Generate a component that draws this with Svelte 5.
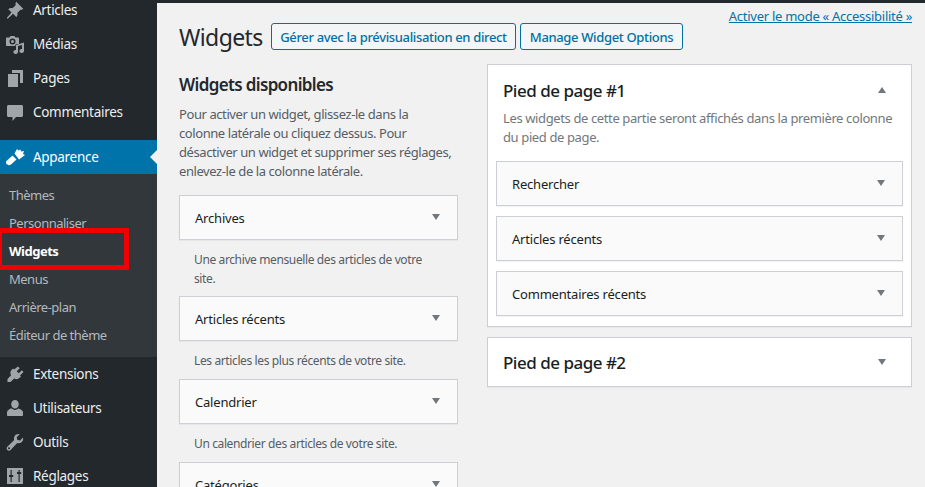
<script>
  const top = [
    { label: 'Articles', icon: 'pin' },
    { label: 'Médias', icon: 'media' },
    { label: 'Pages', icon: 'pages' },
    { label: 'Commentaires', icon: 'comment' }
  ];
  const sub = ['Thèmes', 'Personnaliser', 'Widgets', 'Menus', 'Arrière-plan', 'Éditeur de thème'];
  const bottom = [
    { label: 'Extensions', icon: 'plug' },
    { label: 'Utilisateurs', icon: 'user' },
    { label: 'Outils', icon: 'tool' },
    { label: 'Réglages', icon: 'settings' }
  ];
  const icons = {
    pin: 'M11.2 1.8l7 7-1.5 1.3-.9-.6-3.5 3.4c.5 1.5.1 3-1 4.1L8 13.8l-5.3 4.9-1-.6 4.8-5.5-3.2-3.3c1.2-1.1 2.7-1.5 4.2-1l3.4-3.4-.6-.9z',
    media: 'M2 3.5h2.5l1-1.5h4l1 1.5H13c.6 0 1 .4 1 1V10h-2.5l-1.2.8V12H2c-.6 0-1-.4-1-1V4.500c0-.6.4-1 1-1zM7.500 4.500a3 3 0 1 0 0 6 3 3 0 0 0 0-6zm0 1.500a1.500 1.500 0 1 1 0 3 1.500 1.500 0 0 1 0-3zM19 8.500V17a2.300 2 0 1 1-2-2V11l-4 1v6a2.300 2 0 1 1-2-2v-5z',
    pages: 'M7 2h11v13h-3V5H7zM3 6h10v13H3z',
    comment: 'M3.500 3h13c.8 0 1.500.7 1.500 1.500v9c0 .8-.7 1.500-1.500 1.500H11l-3.500 4v-4h-4C2.700 15 2 14.300 2 13.500v-9C2 3.700 2.700 3 3.500 3z',
    brush: 'M9.500 6.500L12 2l1.500 1.500 2-1 .5 2 3-.5-1 3 2 1-6 4.500zM7.500 8.500l4 4L6 17.500c-1.500 1-3.500 1-4.500-.5-.8-1.500-.5-3 .5-3.500z',
    plug: 'M13 2.500l1.700 1.700-3 3 2.100 2.100 3-3L18.500 8l-3.500 3.500 1 1-1.300 1.300c-1.600 1.600-3.800 1.700-5.500.6L5.500 18H2.500v-3l3.600-3.700c-1.100-1.700-1-3.900.6-5.500L8 4.500l1 1z',
    user: 'M10 2c2.200 0 3.800 1.800 3.800 4.200 0 2.400-1.600 4.300-3.800 4.300S6.200 8.600 6.200 6.200C6.200 3.800 7.800 2 10 2zM6.800 10.600c.9.800 2 1.300 3.200 1.300s2.300-.5 3.200-1.300c2.600.6 4.300 2 4.800 3.400v3c0 .6-.4 1-1 1H3c-.6 0-1-.4-1-1v-3c.5-1.400 2.200-2.800 3.800-3.400z',
    tool: 'M18 5.500c.5 2-.2 4-1.800 5-1.200.8-2.700 1-4 .5l-6.600 7c-.9.900-2.400.9-3.300 0s-.9-2.300 0-3.200l6.900-6.700c-.5-1.400-.3-2.900.5-4.100 1-1.600 3-2.300 5-1.800l-3 3 .7 2.700 2.700.6zM4 15.300a1 1 0 1 0 0 2 1 1 0 0 0 0-2z'
  };
  const avail = [
    { t: 'Archives', d: 'Une archive mensuelle des articles de votre site.' },
    { t: 'Articles récents', d: 'Les articles les plus récents de votre site.' },
    { t: 'Calendrier', d: 'Un calendrier des articles de votre site.' },
    { t: 'Catégories', d: '' }
  ];
  const foot = ['Rechercher', 'Articles récents', 'Commentaires récents'];
</script>

{#snippet icon(name)}
  <svg class="ico" viewBox="0 0 20 20" aria-hidden="true">
    {#if name === 'settings'}
      <path fill-rule="evenodd" d="M2 2h16v16H2zM5.500 4v5H4v2h1.500v5h1.200v-5h1.500V9H6.700V4zM13.500 4v2H12v2h1.500v8h1.200V8h1.500V6h-1.500V4z" />
    {:else}
      <path fill-rule="evenodd" d={icons[name]} />
    {/if}
  </svg>
{/snippet}

{#snippet caret(up)}
  <span class="caret" class:up></span>
{/snippet}

<div class="page">
  <aside class="side">
    <ul class="menu first">
      {#each top as m}
        <li class="item">{@render icon(m.icon)}<span>{m.label}</span></li>
      {/each}
    </ul>
    <div class="item current">
      {@render icon('brush')}<span>Apparence</span>
      <i class="notch"></i>
    </div>
    <ul class="sub">
      {#each sub as s}
        <li class:on={s === 'Widgets'}>{s}</li>
      {/each}
    </ul>
    <ul class="menu">
      {#each bottom as m}
        <li class="item">{@render icon(m.icon)}<span>{m.label}</span></li>
      {/each}
    </ul>
    <div class="mark"></div>
  </aside>

  <main class="main">
    <div class="access"><a href="#a">Activer le mode « Accessibilité »</a></div>
    <header class="head">
      <h1>Widgets</h1>
      <button class="b1">Gérer avec la prévisualisation en direct</button>
      <button class="b2">Manage Widget Options</button>
    </header>
    <div class="cols">
      <section class="left">
        <h2>Widgets disponibles</h2>
        <p class="intro">Pour activer un widget, glissez-le dans la<br />colonne latérale ou cliquez dessus. Pour<br />désactiver un widget et supprimer ses réglages,<br />enlevez-le de la colonne latérale.</p>
        {#each avail as w}
          <div class="widget"><span>{w.t}</span>{@render caret(false)}</div>
          {#if w.d}<p class="wdesc">{w.d}</p>{/if}
        {/each}
      </section>
      <section class="right">
        <div class="area open">
          <div class="atitle"><h3>Pied de page #1</h3>{@render caret(true)}</div>
          <p class="adesc">Les widgets de cette partie seront affichés dans la première colonne<br />du pied de page.</p>
          {#each foot as f}
            <div class="widget inner"><span>{f}</span>{@render caret(false)}</div>
          {/each}
        </div>
        <div class="area closed">
          <div class="atitle"><h3>Pied de page #2</h3>{@render caret(false)}</div>
        </div>
      </section>
    </div>
  </main>
</div>

<style>
  :global(body) {
    margin: 0;
    overflow: hidden;
    background: #f1f1f1;
  }
  .page {
    display: flex;
    width: 925px;
    height: 487px;
    overflow: hidden;
    font-family: "Noto Sans", "Open Sans", sans-serif;
    font-size: 13px;
    color: #444;
    position: relative;
  }
  ul {
    list-style: none;
    margin: 0;
    padding: 0;
  }
  .side {
    width: 157px;
    flex: none;
    background: #23282d;
    color: #eee;
    position: relative;
    overflow: hidden;
  }
  .menu.first {
    margin-top: -7px;
    margin-bottom: 11px;
  }
  .item {
    height: 34px;
    display: flex;
    align-items: center;
    padding-left: 5px;
    gap: 8px;
    position: relative;
    letter-spacing: -0.3px;
    font-size: 13.500px;
  }
  .ico {
    width: 20px;
    height: 20px;
    fill: #a0a5aa;
    flex: none;
  }
  .current {
    background: #0073aa;
    color: #fff;
  }
  .current .ico {
    fill: #fff;
  }
  .notch {
    position: absolute;
    right: 0;
    top: 10px;
    border: 7.500px solid transparent;
    border-right-color: #f1f1f1;
    border-left-width: 0;
  }
  .sub {
    background: #32373c;
    padding: 7px 0 8px;
  }
  .sub li {
    height: 28px;
    line-height: 28px;
    padding-left: 9px;
    color: #b4b9be;
    letter-spacing: -0.5px;
  }
  .sub li.on {
    color: #fff;
    font-weight: 700;
    letter-spacing: -0.5px;
  }
  .mark {
    position: absolute;
    left: -3px;
    top: 228px;
    width: 122px;
    height: 32px;
    border: 5px solid #f00000;
  }
  .main {
    flex: 1;
    min-width: 0;
    background: #f1f1f1;
    border-top: 3px solid #23282d;
    padding-left: 22px;
    position: relative;
  }
  .access {
    position: absolute;
    right: 13px;
    top: 5px;
    font-size: 13px;
    line-height: 17px;
    letter-spacing: -0.27px;
  }
  .access a {
    color: #0073aa;
  }
  .head {
    display: flex;
    align-items: flex-start;
    height: 47px;
    padding-top: 20px;
    box-sizing: border-box;
    margin-bottom: -3px;
  }
  h1 {
    margin: 0 9px 0 0;
    width: 83px;
    font-size: 23px;
    font-weight: 400;
    line-height: 28px;
    color: #23282d;
    letter-spacing: -0.6px;
    white-space: nowrap;
  }
  button {
    height: 27px;
    padding: 0;
    background: #f3f5f6;
    border: 1px solid #0071a1;
    border-radius: 3px;
    color: #0071a1;
    font: 500 13px "Noto Sans", "Open Sans", sans-serif;
    letter-spacing: -0.35px;
    margin-right: 4px;
  }
  .b1 { width: 245px; }
  .b2 { width: 163px; }
  .cols {
    display: flex;
    gap: 29px;
    align-items: flex-start;
  }
  .left {
    width: 279px;
    flex: none;
  }
  h2 {
    margin: 26px 0 0;
    font-size: 17px;
    line-height: 24px;
    font-weight: 600;
    color: #23282d;
    letter-spacing: -0.65px;
  }
  .intro {
    margin: 8px 0 14px;
    line-height: 19px;
    color: #555d66;
    letter-spacing: -0.42px;
    white-space: nowrap;
  }
  .widget {
    height: 45px;
    box-sizing: border-box;
    background: #fafafa;
    border: 1px solid #ccd0d4;
    box-shadow: 0 1px 1px rgba(0, 0, 0, 0.04);
    display: flex;
    align-items: center;
    justify-content: space-between;
    padding: 0 17px 0 15px;
    font-weight: 400;
    color: #191e23;
    letter-spacing: -0.2px;
  }
  .wdesc {
    margin: 0;
    min-height: 38px;
    box-sizing: border-box;
    padding: 10px 15px 8px;
    font-size: 12px;
    line-height: 19px;
    color: #555d66;
    letter-spacing: -0.38px;
  }
  .caret {
    width: 0;
    height: 0;
    border-left: 4.500px solid transparent;
    border-right: 4.500px solid transparent;
    border-top: 6px solid #72777c;
    margin-top: -1px;
  }
  .caret.up {
    border-top: 0;
    border-bottom: 6px solid #72777c;
  }
  .right {
    width: 425px;
    flex: none;
    margin-top: 17px;
  }
  .area {
    background: #fff;
    border: 1px solid #ccd0d4;
    box-shadow: 0 1px 1px rgba(0, 0, 0, 0.04);
    box-sizing: border-box;
    margin-bottom: 10px;
  }
  .area.open {
    height: 263px;
    padding: 0 8px;
  }
  .area.closed {
    height: 50px;
    padding: 0 8px;
  }
  .atitle {
    display: flex;
    justify-content: space-between;
    align-items: center;
    padding: 0 17px 0 7px;
    height: 49px;
  }
  .area.open .atitle {
    height: 38px;
    padding-top: 6px;
  }
  h3 {
    margin: 0;
    font-size: 17px;
    font-weight: 500;
    color: #191e23;
    letter-spacing: -0.5px;
  }
  .adesc {
    margin: 0 0 14px;
    padding: 0 7px;
    line-height: 19px;
    color: #72777c;
    letter-spacing: -0.38px;
    white-space: nowrap;
  }
  .inner {
    margin-bottom: 10px;
  }
</style>
